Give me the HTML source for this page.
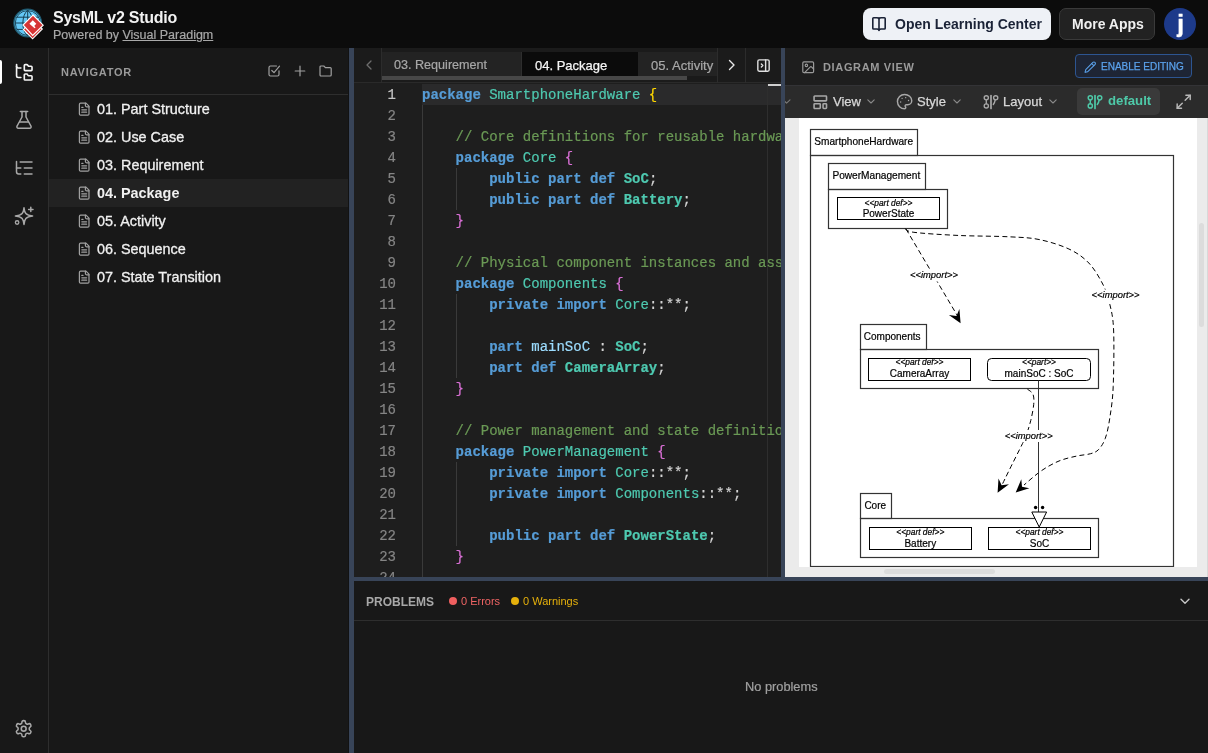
<!DOCTYPE html>
<html><head><meta charset="utf-8">
<style>
*{box-sizing:border-box;margin:0;padding:0}
html,body{width:1208px;height:753px;overflow:hidden;background:#181818;font-family:"Liberation Sans",sans-serif;}
.a{position:absolute}
#hdr{left:0;top:0;width:1208px;height:48px;background:#0c0c0c}
#act{left:0;top:48px;width:49px;height:705px;background:#181818;border-right:1px solid #2e2e2e}
#nav{left:49px;top:48px;width:300px;height:705px;background:#181818}
.spl{background:#384458}
#ed{left:354px;top:48px;width:427px;height:529px;background:#1e1e1e;overflow:hidden}
#dg{left:785px;top:48px;width:423px;height:529px;background:#1e1e1e;overflow:hidden}
#pb{left:354px;top:581px;width:854px;height:172px;background:#181818}
svg{display:block}
.code{font-family:"Liberation Mono",monospace;font-size:14px;white-space:pre;line-height:21px;-webkit-text-stroke-width:0.2px}
.k{color:#569cd6;font-weight:bold}
.t{color:#4ec9b0}
.tb{color:#4ec9b0;font-weight:bold}
.c{color:#6a9955}
.v{color:#9cdcfe}
.p{color:#d4d4d4}
.y{color:#ffd700}
.m{color:#da70d6}
</style></head><body><div id="root" style="position:absolute;left:0;top:0;width:1208px;height:753px;overflow:hidden;will-change:transform">
<!-- HEADER -->
<div id="hdr" class="a">
  <svg class="a" style="left:10px;top:6px" width="36" height="36" viewBox="10 6 36 36">
    <circle cx="27.7" cy="23" r="13.8" fill="#64c8f6" stroke="#1f5a70" stroke-width="1.3"/>
    <circle cx="27.7" cy="23" r="12.4" fill="none" stroke="#0f2f3c" stroke-width="0.8"/>
    <g stroke="#173f52" stroke-width="1" fill="none">
      <path d="M27.7 10.5 C21.5 14 21 32 27.7 35.5"/>
      <path d="M27.7 10.5 C34 14 34.5 32 27.7 35.5"/>
      <line x1="27.7" y1="10.5" x2="27.7" y2="35.5"/>
      <line x1="15" y1="23" x2="40.5" y2="23"/>
      <line x1="16.5" y1="17.2" x2="39" y2="17.2"/>
      <line x1="16.5" y1="29.4" x2="39" y2="29.4"/>
    </g>
    <path d="M33 19.8 L42.3 29 L32.6 38.8 L23.4 29.4 Z" fill="#d63434" stroke="#fff" stroke-width="1.1"/>
    <path d="M33 15 L43.2 25.2 L32.7 35.4 L23 25 Z" fill="#d63434" stroke="#fff" stroke-width="1.1"/>
    <path d="M32.8 20.3 L36.3 23.8 L34.2 25.9 L35.6 27.3 L34.6 28.3 L29.4 23.7 Z" fill="#fff"/>
  </svg>
  <div class="a" style="left:53px;top:9px;font-size:16px;font-weight:bold;color:#f2f2f2;letter-spacing:-0.25px">SysML v2 Studio</div>
  <div class="a" style="left:53px;top:28px;font-size:12.5px;color:#a8a8a8;-webkit-text-stroke:0.2px #a8a8a8">Powered by <span style="text-decoration:underline">Visual Paradigm</span></div>
  <div class="a" style="left:863px;top:8px;width:188px;height:32px;border-radius:8px;background:#eef1f6"></div>
  <svg class="a" style="left:866px;top:12px" width="24" height="24" viewBox="866 12 24 24" fill="none" stroke="#1a2236" stroke-width="1.6" stroke-linecap="round" stroke-linejoin="round"><path d="M872.8 18.6Q872.8 17.8 873.6 17.8H877Q878.4 17.8 879 18.6Q879.6 17.8 881 17.8H884.4Q885.2 17.8 885.2 18.6V28.2Q885.2 29 884.4 29H881Q879.6 29 879 29.8Q878.4 29 877 29H873.6Q872.8 29 872.8 28.2Z"/><path d="M879 18.6V30.5"/></svg>
  <div class="a" style="left:895px;top:16px;font-size:14px;font-weight:bold;color:#1a2236">Open Learning Center</div>
  <div class="a" style="left:1059px;top:8px;width:96px;height:32px;border-radius:7px;background:#222;border:1px solid #3a3a3a"></div>
  <div class="a" style="left:1072px;top:16px;font-size:14px;font-weight:bold;color:#f0f0f0">More Apps</div>
  <div class="a" style="left:1164px;top:8px;width:32px;height:32px;border-radius:16px;background:#1d3a8a"></div><div class="a" style="left:1164px;top:9px;width:33px;text-align:center;font-weight:bold;font-size:24px;line-height:30px;color:#fff;-webkit-text-stroke:0.4px #fff">j</div>
</div>

<!-- ACTIVITY BAR -->
<div id="act" class="a">
  <div class="a" style="left:0;top:12px;width:2px;height:24px;background:#fff;border-radius:0 2px 2px 0"></div>
  <svg class="a" style="left:13.60px;top:14.10px" width="20.6" height="20.6" viewBox="0 0 24 24" fill="none" stroke="#f5f5f5" stroke-width="1.9" stroke-linecap="round" stroke-linejoin="round"><path d="M20 10a1 1 0 0 0 1-1V6a1 1 0 0 0-1-1h-2.5a1 1 0 0 1-.8-.4l-.9-1.2A1 1 0 0 0 15 3h-2a1 1 0 0 0-1 1v5a1 1 0 0 0 1 1Z"/><path d="M20 21a1 1 0 0 0 1-1v-3a1 1 0 0 0-1-1h-2.9a1 1 0 0 1-.88-.55l-.42-.85a1 1 0 0 0-.92-.6H13a1 1 0 0 0-1 1v5a1 1 0 0 0 1 1Z"/><path d="M3 5a2 2 0 0 0 2 2h3"/><path d="M3 3v13a2 2 0 0 0 2 2h3"/></svg>
  <svg class="a" style="left:15px;top:62px" width="18" height="20" viewBox="0 0 18 20" fill="none" stroke="#a8a8a8" stroke-width="1.5" stroke-linecap="round" stroke-linejoin="round"><path d="M5.3 1.5h7.4"/><path d="M7 1.5v5.5l-4.9 9a1.5 1.5 0 0 0 1.3 2.3h11.2a1.5 1.5 0 0 0 1.3-2.3l-4.9-9v-5.5"/><path d="M4.6 12h8.8"/></svg>
  <svg class="a" style="left:8px;top:106px" width="32" height="32" viewBox="8 154 32 32" fill="none" stroke="#a8a8a8" stroke-width="1.5" stroke-linecap="round" stroke-linejoin="round"><path d="M16.5 161.5V171.8Q16.5 173.9 18.6 173.9H20.8"/><path d="M16.5 168H20.8"/><path d="M20.2 162H32"/><path d="M24.3 168H32"/><path d="M24.3 173.9H32"/></svg>
  <svg class="a" style="left:8px;top:152px" width="32" height="32" viewBox="8 200 32 32" fill="none" stroke="#a8a8a8" stroke-width="1.5" stroke-linecap="round" stroke-linejoin="round"><path d="M24 207.8C24.5 212.6 25.6 215.5 32.6 216C25.6 216.5 24.5 219.4 24 224.4C23.5 219.4 22.4 216.5 15.4 216C22.4 215.5 23.5 212.6 24 207.8Z"/><path d="M30.8 207.2v4.4M28.6 209.4h4.4"/><circle cx="17.1" cy="222.5" r="1.75" stroke-width="1.3"/></svg>
  <svg class="a" style="left:14.20px;top:671.20px" width="19.4" height="19.4" viewBox="0 0 24 24" fill="none" stroke="#a8a8a8" stroke-width="1.9" stroke-linecap="round" stroke-linejoin="round"><path d="M12.22 2h-.44a2 2 0 0 0-2 2v.18a2 2 0 0 1-1 1.73l-.43.25a2 2 0 0 1-2 0l-.15-.08a2 2 0 0 0-2.73.73l-.22.38a2 2 0 0 0 .73 2.73l.15.1a2 2 0 0 1 1 1.72v.51a2 2 0 0 1-1 1.74l-.15.09a2 2 0 0 0-.73 2.730l.22.38a2 2 0 0 0 2.73.73l.15-.08a2 2 0 0 1 2 0l.43.25a2 2 0 0 1 1 1.73V20a2 2 0 0 0 2 2h.44a2 2 0 0 0 2-2v-.18a2 2 0 0 1 1-1.73l.43-.25a2 2 0 0 1 2 0l.15.08a2 2 0 0 0 2.73-.73l.22-.39a2 2 0 0 0-.73-2.73l-.15-.08a2 2 0 0 1-1-1.74v-.5a2 2 0 0 1 1-1.74l.15-.09a2 2 0 0 0 .73-2.73l-.22-.38a2 2 0 0 0-2.73-.73l-.15.08a2 2 0 0 1-2 0l-.43-.25a2 2 0 0 1-1-1.73V4a2 2 0 0 0-2-2z"/><circle cx="12" cy="12" r="3"/></svg>
</div>

<!-- NAVIGATOR -->
<div id="nav" class="a">
  <div class="a" style="left:12px;top:18px;font-size:11px;font-weight:bold;color:#9a9a9a;letter-spacing:0.75px">NAVIGATOR</div>
  <div class="a" style="left:0;top:46px;width:300px;height:1px;background:#2e2e2e"></div>
  <svg class="a" style="left:28px;top:54.2px" width="14.4" height="14.4" viewBox="0 0 24 24" fill="none" stroke="#a0a0a0" stroke-width="2" stroke-linecap="round" stroke-linejoin="round"><path d="M15 2H6a2 2 0 0 0-2 2v16a2 2 0 0 0 2 2h12a2 2 0 0 0 2-2V7Z"/><path d="M14 2v4a2 2 0 0 0 2 2h4"/><path d="M10 9H8"/><path d="M16 13H8"/><path d="M16 17H8"/></svg>
  <div class="a" style="left:48px;top:53px;font-size:14.4px;font-weight:normal;color:#f0f0f0;-webkit-text-stroke:0.3px #f0f0f0;white-space:nowrap">01. Part Structure</div>
  <svg class="a" style="left:28px;top:82.2px" width="14.4" height="14.4" viewBox="0 0 24 24" fill="none" stroke="#a0a0a0" stroke-width="2" stroke-linecap="round" stroke-linejoin="round"><path d="M15 2H6a2 2 0 0 0-2 2v16a2 2 0 0 0 2 2h12a2 2 0 0 0 2-2V7Z"/><path d="M14 2v4a2 2 0 0 0 2 2h4"/><path d="M10 9H8"/><path d="M16 13H8"/><path d="M16 17H8"/></svg>
  <div class="a" style="left:48px;top:81px;font-size:14.4px;font-weight:normal;color:#f0f0f0;-webkit-text-stroke:0.3px #f0f0f0;white-space:nowrap">02. Use Case</div>
  <svg class="a" style="left:28px;top:110.2px" width="14.4" height="14.4" viewBox="0 0 24 24" fill="none" stroke="#a0a0a0" stroke-width="2" stroke-linecap="round" stroke-linejoin="round"><path d="M15 2H6a2 2 0 0 0-2 2v16a2 2 0 0 0 2 2h12a2 2 0 0 0 2-2V7Z"/><path d="M14 2v4a2 2 0 0 0 2 2h4"/><path d="M10 9H8"/><path d="M16 13H8"/><path d="M16 17H8"/></svg>
  <div class="a" style="left:48px;top:109px;font-size:14.4px;font-weight:normal;color:#f0f0f0;-webkit-text-stroke:0.3px #f0f0f0;white-space:nowrap">03. Requirement</div>
  <div class="a" style="left:0;top:131px;width:300px;height:28px;background:#222222"></div>
  <svg class="a" style="left:28px;top:138.2px" width="14.4" height="14.4" viewBox="0 0 24 24" fill="none" stroke="#a0a0a0" stroke-width="2" stroke-linecap="round" stroke-linejoin="round"><path d="M15 2H6a2 2 0 0 0-2 2v16a2 2 0 0 0 2 2h12a2 2 0 0 0 2-2V7Z"/><path d="M14 2v4a2 2 0 0 0 2 2h4"/><path d="M10 9H8"/><path d="M16 13H8"/><path d="M16 17H8"/></svg>
  <div class="a" style="left:48px;top:137px;font-size:14.4px;font-weight:bold;color:#f0f0f0;white-space:nowrap">04. Package</div>
  <svg class="a" style="left:28px;top:166.2px" width="14.4" height="14.4" viewBox="0 0 24 24" fill="none" stroke="#a0a0a0" stroke-width="2" stroke-linecap="round" stroke-linejoin="round"><path d="M15 2H6a2 2 0 0 0-2 2v16a2 2 0 0 0 2 2h12a2 2 0 0 0 2-2V7Z"/><path d="M14 2v4a2 2 0 0 0 2 2h4"/><path d="M10 9H8"/><path d="M16 13H8"/><path d="M16 17H8"/></svg>
  <div class="a" style="left:48px;top:165px;font-size:14.4px;font-weight:normal;color:#f0f0f0;-webkit-text-stroke:0.3px #f0f0f0;white-space:nowrap">05. Activity</div>
  <svg class="a" style="left:28px;top:194.2px" width="14.4" height="14.4" viewBox="0 0 24 24" fill="none" stroke="#a0a0a0" stroke-width="2" stroke-linecap="round" stroke-linejoin="round"><path d="M15 2H6a2 2 0 0 0-2 2v16a2 2 0 0 0 2 2h12a2 2 0 0 0 2-2V7Z"/><path d="M14 2v4a2 2 0 0 0 2 2h4"/><path d="M10 9H8"/><path d="M16 13H8"/><path d="M16 17H8"/></svg>
  <div class="a" style="left:48px;top:193px;font-size:14.4px;font-weight:normal;color:#f0f0f0;-webkit-text-stroke:0.3px #f0f0f0;white-space:nowrap">06. Sequence</div>
  <svg class="a" style="left:28px;top:222.2px" width="14.4" height="14.4" viewBox="0 0 24 24" fill="none" stroke="#a0a0a0" stroke-width="2" stroke-linecap="round" stroke-linejoin="round"><path d="M15 2H6a2 2 0 0 0-2 2v16a2 2 0 0 0 2 2h12a2 2 0 0 0 2-2V7Z"/><path d="M14 2v4a2 2 0 0 0 2 2h4"/><path d="M10 9H8"/><path d="M16 13H8"/><path d="M16 17H8"/></svg>
  <div class="a" style="left:48px;top:221px;font-size:14.4px;font-weight:normal;color:#f0f0f0;-webkit-text-stroke:0.3px #f0f0f0;white-space:nowrap">07. State Transition</div>
  <svg class="a" style="left:218px;top:16px" width="14" height="14" viewBox="0 0 14 14" fill="none" stroke="#a0a0a0" stroke-width="1.2" stroke-linecap="round" stroke-linejoin="round"><path d="M12 6.8v3.7a1.5 1.5 0 0 1-1.5 1.5h-7a1.5 1.5 0 0 1-1.5-1.5v-7a1.5 1.5 0 0 1 1.5-1.5h6"/><path d="M4.8 6.5l2.2 2.2l5.5-6.5"/></svg>
  <svg class="a" style="left:245px;top:17px" width="12" height="12" viewBox="0 0 12 12" fill="none" stroke="#a0a0a0" stroke-width="1.2" stroke-linecap="round"><path d="M6 1.2v9.6M1.2 6h9.6"/></svg>
  <svg class="a" style="left:270px;top:17px" width="14" height="12" viewBox="0 0 14 12" fill="none" stroke="#a0a0a0" stroke-width="1.2" stroke-linejoin="round"><path d="M1 2a1 1 0 0 1 1-1h2.8l1.6 1.6h4.8a1 1 0 0 1 1 1v6.4a1 1 0 0 1-1 1h-9.2a1 1 0 0 1-1-1z"/></svg>
</div>

<div class="a spl" style="left:349px;top:48px;width:5px;height:705px"></div>
<div class="a" style="left:348px;top:48px;width:1px;height:705px;background:#121212"></div>

<!-- EDITOR -->
<div id="ed" class="a">
  <div class="a" style="left:0;top:0;width:427px;height:35px;background:#1b1b1b;border-bottom:1px solid #2a2a2a"></div>
  <div class="a" style="left:27px;top:0;width:1px;height:35px;background:#2c2c2c"></div>
  <svg class="a" style="left:9px;top:11px" width="12" height="12" viewBox="0 0 12 12" fill="none" stroke="#6e6e6e" stroke-width="1.3" stroke-linecap="round" stroke-linejoin="round"><path d="M8 2L4 6L8 10"/></svg>
  <div class="a" style="left:28px;top:4px;width:140px;height:24px;background:#232323"></div>
  <div class="a" style="left:168px;top:4px;width:116px;height:24px;background:#0b0b0b"></div>
  <div class="a" style="left:284px;top:4px;width:79px;height:24px;background:#232323;overflow:hidden"></div>
  <div class="a" style="left:167px;top:4px;width:1px;height:24px;background:#2e2e2e"></div>
  <div class="a" style="left:28px;top:28px;width:335px;height:4px;background:#1a1a1a"></div>
  <div class="a" style="left:28px;top:28px;width:305px;height:4px;background:#474747"></div>
  <div class="a" style="left:40px;top:10px;font-size:12.6px;color:#a8a8a8;-webkit-text-stroke:0.2px #a8a8a8;white-space:nowrap">03. Requirement</div>
  <div class="a" style="left:181px;top:10px;font-size:13px;color:#f5f5f5;-webkit-text-stroke:0.25px #f5f5f5;white-space:nowrap">04. Package</div>
  <div class="a" style="left:297px;top:10px;width:66px;overflow:hidden;font-size:13px;color:#a8a8a8;-webkit-text-stroke:0.2px #a8a8a8;white-space:nowrap">05. Activity</div>
  <div class="a" style="left:363px;top:0;width:1px;height:35px;background:#2c2c2c"></div>
  <div class="a" style="left:391px;top:0;width:1px;height:35px;background:#2c2c2c"></div>
  <svg class="a" style="left:372px;top:11px" width="12" height="12" viewBox="0 0 12 12" fill="none" stroke="#e8e8e8" stroke-width="1.4" stroke-linecap="round" stroke-linejoin="round"><path d="M3.5 1.5L8 6L3.5 10.5"/></svg>
  <svg class="a" style="left:401px;top:9px" width="17" height="17" viewBox="0 0 24 24" fill="none" stroke="#e0e0e0" stroke-width="2" stroke-linecap="round" stroke-linejoin="round"><rect x="4" y="4" width="16" height="16" rx="2"/><path d="M15 4v16"/><path d="M9 10l2 2l-2 2"/></svg>
  <div class="a" style="left:68px;top:36px;width:359px;height:21px;background:#2a2a2b"></div>
  <div class="a" style="left:68px;top:57px;width:1px;height:480px;background:#3a3a3a"></div>
  <div class="a" style="left:102px;top:120px;width:1px;height:42px;background:#3a3a3a"></div>
  <div class="a" style="left:102px;top:246px;width:1px;height:84px;background:#3a3a3a"></div>
  <div class="a" style="left:102px;top:414px;width:1px;height:84px;background:#3a3a3a"></div>
  <div class="a" style="left:413px;top:36px;width:1px;height:500px;background:#2e2e2e"></div>
  <div class="a" style="left:414px;top:36px;width:13px;height:2px;background:#d0d0d0"></div>
  <div class="a code" style="left:0;top:37px;width:42px;text-align:right;color:#858585"><span style="color:#c6c6c6">1</span>
2
3
4
5
6
7
8
9
10
11
12
13
14
15
16
17
18
19
20
21
22
23
24</div>
  <div class="a code" style="left:68px;top:37px;color:#d4d4d4"><span class="k">package</span> <span class="t">SmartphoneHardware</span> <span class="y">{</span>

    <span class="c">// Core definitions for reusable hardware components</span>
    <span class="k">package</span> <span class="t">Core</span> <span class="m">{</span>
        <span class="k">public</span> <span class="k">part</span> <span class="k">def</span> <span class="tb">SoC</span><span class="p">;</span>
        <span class="k">public</span> <span class="k">part</span> <span class="k">def</span> <span class="tb">Battery</span><span class="p">;</span>
    <span class="m">}</span>

    <span class="c">// Physical component instances and assemblies</span>
    <span class="k">package</span> <span class="t">Components</span> <span class="m">{</span>
        <span class="k">private</span> <span class="k">import</span> <span class="t">Core</span><span class="p">::**;</span>

        <span class="k">part</span> <span class="v">mainSoC</span> <span class="p">:</span> <span class="tb">SoC</span><span class="p">;</span>
        <span class="k">part</span> <span class="k">def</span> <span class="tb">CameraArray</span><span class="p">;</span>
    <span class="m">}</span>

    <span class="c">// Power management and state definitions</span>
    <span class="k">package</span> <span class="t">PowerManagement</span> <span class="m">{</span>
        <span class="k">private</span> <span class="k">import</span> <span class="t">Core</span><span class="p">::**;</span>
        <span class="k">private</span> <span class="k">import</span> <span class="t">Components</span><span class="p">::**;</span>

        <span class="k">public</span> <span class="k">part</span> <span class="k">def</span> <span class="tb">PowerState</span><span class="p">;</span>
    <span class="m">}</span>
</div>
</div>
<div class="a spl" style="left:781px;top:48px;width:4px;height:533px"></div>
<div class="a spl" style="left:354px;top:577px;width:854px;height:4px"></div>

<!-- DIAGRAM -->
<div id="dg" class="a">
  <div class="a" style="left:0;top:37px;width:423px;height:1px;background:#333336"></div>
  <svg class="a" style="left:15.80px;top:11.80px" width="14.4" height="14.4" viewBox="0 0 24 24" fill="none" stroke="#9a9a9a" stroke-width="2" stroke-linecap="round" stroke-linejoin="round"><rect width="18" height="18" x="3" y="3" rx="2" ry="2"/><circle cx="9" cy="9" r="2"/><path d="m21 15-3.086-3.086a2 2 0 0 0-2.828 0L6 21"/></svg>
  <div class="a" style="left:38px;top:13px;font-size:11px;font-weight:bold;color:#9a9a9a;letter-spacing:0.65px;white-space:nowrap">DIAGRAM VIEW</div>
  <div class="a" style="left:290px;top:6px;width:117px;height:24px;border-radius:4px;background:#1e2535;border:1px solid #2d5591"></div>
  <svg class="a" style="left:298.50px;top:12.60px" width="12.4" height="12.4" viewBox="0 0 24 24" fill="none" stroke="#5aa0ea" stroke-width="2" stroke-linecap="round" stroke-linejoin="round"><path d="M21.174 6.812a1 1 0 0 0-3.986-3.987L3.842 16.174a2 2 0 0 0-.5.83l-1.321 4.352a.5.5 0 0 0 .623.622l4.353-1.32a2 2 0 0 0 .83-.497z"/><path d="m15 5 4 4"/></svg>
  <div class="a" style="left:316px;top:13px;font-size:10px;font-weight:normal;letter-spacing:0px;-webkit-text-stroke:0.25px #5aa0ea;color:#5aa0ea;white-space:nowrap">ENABLE EDITING</div>
  <div class="a" style="left:0;top:38px;width:423px;height:32px;background:#2b2b2b"></div>
  <svg class="a" style="left:0;top:42px" width="10" height="20" viewBox="785 90 10 20" fill="none" stroke="#7a7a7a" stroke-width="1.1" stroke-linecap="round" stroke-linejoin="round"><path d="M784 100.6l2.6 2.6l3.4-3.4"/></svg>
  <svg class="a" style="left:26.70px;top:45.70px" width="16.6" height="16.6" viewBox="0 0 24 24" fill="none" stroke="#a8a8a8" stroke-width="2.3" stroke-linecap="round" stroke-linejoin="round"><rect width="18" height="7" x="3" y="3" rx="1"/><rect width="9" height="7" x="3" y="14" rx="1"/><rect width="5" height="7" x="16" y="14" rx="1"/></svg>
  <div class="a" style="left:48px;top:46px;font-size:13px;color:#d8d8d8;-webkit-text-stroke:0.25px #d8d8d8;white-space:nowrap">View</div>
  <svg class="a" style="left:82px;top:51px" width="8" height="5" viewBox="0 0 8 5" fill="none" stroke="#8a8a8a" stroke-width="1.1" stroke-linecap="round" stroke-linejoin="round"><path d="M0.8 0.8l3.2 3.2l3.2-3.2"/></svg>
  <svg class="a" style="left:111.40px;top:45.40px" width="17.2" height="17.2" viewBox="0 0 24 24" fill="none" stroke="#a8a8a8" stroke-width="2" stroke-linecap="round" stroke-linejoin="round"><circle cx="13.5" cy="6.5" r="1" fill="#a8a8a8" stroke="none"/><circle cx="17.5" cy="10.5" r="1" fill="#a8a8a8" stroke="none"/><circle cx="8.5" cy="7.5" r="1" fill="#a8a8a8" stroke="none"/><circle cx="6.5" cy="12.5" r="1" fill="#a8a8a8" stroke="none"/><path d="M12 2C6.5 2 2 6.5 2 12s4.5 10 10 10c.926 0 1.648-.746 1.648-1.688 0-.437-.18-.835-.437-1.125-.29-.289-.438-.652-.438-1.125a1.64 1.64 0 0 1 1.668-1.668h1.996c3.051 0 5.555-2.503 5.555-5.554C21.965 6.012 17.461 2 12 2z"/></svg>
  <div class="a" style="left:132px;top:46px;font-size:13px;color:#d8d8d8;-webkit-text-stroke:0.25px #d8d8d8;white-space:nowrap">Style</div>
  <svg class="a" style="left:168px;top:51px" width="8" height="5" viewBox="0 0 8 5" fill="none" stroke="#8a8a8a" stroke-width="1.1" stroke-linecap="round" stroke-linejoin="round"><path d="M0.8 0.8l3.2 3.2l3.2-3.2"/></svg>
  <svg class="a" style="left:194px;top:42px" width="24" height="24" viewBox="979 90 24 24" fill="none" stroke="#a8a8a8" stroke-width="1.35" stroke-linecap="round" stroke-linejoin="round"><circle cx="986.3" cy="97.8" r="2.1"/><circle cx="986.3" cy="105.9" r="2.1"/><path d="M986.3 99.9v3.9"/><path d="M991 95.6v12.8" stroke-width="1.7"/><circle cx="995.7" cy="97.8" r="2.1"/><path d="M995.2 99.9c-0.3 2-1 3.4-1.9 4.6"/></svg>
  <div class="a" style="left:218px;top:46px;font-size:13px;color:#d8d8d8;-webkit-text-stroke:0.25px #d8d8d8;white-space:nowrap">Layout</div>
  <svg class="a" style="left:264px;top:51px" width="8" height="5" viewBox="0 0 8 5" fill="none" stroke="#8a8a8a" stroke-width="1.1" stroke-linecap="round" stroke-linejoin="round"><path d="M0.8 0.8l3.2 3.2l3.2-3.2"/></svg>
  <div class="a" style="left:292px;top:40px;width:83px;height:27px;border-radius:5px;background:#3a3a3a"></div>
  <svg class="a" style="left:298.0px;top:42px" width="24" height="24" viewBox="979 90 24 24" fill="none" stroke="#4ec9a8" stroke-width="1.45" stroke-linecap="round" stroke-linejoin="round"><circle cx="986.3" cy="97.8" r="2.1"/><circle cx="986.3" cy="105.9" r="2.1"/><path d="M986.3 99.9v3.9"/><path d="M991 95.6v12.8" stroke-width="1.7"/><circle cx="995.7" cy="97.8" r="2.1"/><path d="M995.2 99.9c-0.3 2-1 3.4-1.9 4.6"/></svg>
  <div class="a" style="left:323px;top:45px;font-size:13.2px;font-weight:bold;color:#4ec9a8;white-space:nowrap">default</div>
  <svg class="a" style="left:390.30px;top:45.25px" width="17.4" height="17.4" viewBox="0 0 24 24" fill="none" stroke="#b8b8b8" stroke-width="2" stroke-linecap="round" stroke-linejoin="round"><path d="M15 3h6v6"/><path d="M9 21H3v-6"/><path d="M21 3l-7 7"/><path d="M3 21l7-7"/></svg>
  <div class="a" style="left:0;top:70px;width:423px;height:459px;background:#ebebeb"></div>
  <div class="a" style="left:14px;top:70px;width:398px;height:449px;background:#fff"></div>
  <div class="a" style="left:99px;top:521px;width:111px;height:5px;border-radius:3px;background:#dcdcdc"></div>
  <div class="a" style="left:414px;top:175px;width:5px;height:104px;border-radius:3px;background:#dcdcdc"></div>
  <div class="a" style="left:422px;top:70px;width:1px;height:459px;background:#d8d8d8"></div>
  <!--DG--><svg class="a" style="left:14px;top:70px" width="398" height="449" viewBox="799 118 398 449" font-family="Liberation Sans, sans-serif">
  <g fill="none" stroke="#333" stroke-width="1.2">
  <rect x="810.5" y="129.5" width="107" height="26"/>
  <rect x="810.5" y="155.5" width="363" height="411"/>
  <rect x="828.5" y="163.5" width="97" height="26"/>
  <rect x="828.5" y="189.5" width="119" height="39"/>
  <rect x="860.5" y="324.5" width="66" height="25"/>
  <rect x="860.5" y="349.5" width="238" height="39"/>
  <rect x="860.5" y="493.5" width="31" height="25"/>
  <rect x="860.5" y="518.5" width="238" height="39"/>
  </g>
  <g fill="none" stroke="#000" stroke-width="1">
  <rect x="837.5" y="197.5" width="102" height="22"/>
  <rect x="868.5" y="358.5" width="102" height="22"/>
  <rect x="987.5" y="358.5" width="103" height="22" rx="4"/>
  <rect x="869.5" y="527.5" width="102" height="22"/>
  <rect x="988.5" y="527.5" width="102" height="22"/>
  </g>
  <g fill="none" stroke="#000" stroke-width="1" stroke-dasharray="5,3.2">
  <path d="M906 229 L957 315"/>
  <path d="M905.0 228.5C906.5 229.1 904.8 231.1 913.9 232.3C923.0 233.5 943.7 234.8 959.6 235.5C975.5 236.2 996.1 236.1 1009.3 236.8C1022.5 237.5 1029.1 237.5 1039.0 239.5C1048.9 241.5 1060.6 245.1 1068.9 249.0C1077.2 252.9 1083.2 257.2 1088.8 263.0C1094.4 268.8 1099.2 277.3 1102.7 284.0C1106.2 290.7 1107.8 295.7 1109.6 303.4C1111.4 311.1 1113.0 316.2 1113.6 330.0C1114.2 343.8 1113.8 371.7 1113.2 386.4C1112.6 401.1 1111.1 409.4 1109.8 418.0C1108.5 426.6 1107.2 433.0 1105.3 438.3C1103.4 443.6 1101.0 447.0 1098.5 449.6C1096.0 452.2 1094.2 452.6 1090.6 453.7C1087.0 454.8 1082.3 454.8 1077.0 456.0C1071.7 457.2 1065.0 458.5 1059.0 461.0C1053.0 463.5 1046.8 467.0 1041.0 471.0C1035.2 475.0 1026.8 482.7 1024.0 485.0"/>
  <path d="M1027.4 389.1C1028.3 390.0 1032.0 391.7 1033.0 394.3C1034.0 396.9 1034.1 400.2 1033.7 404.5C1033.3 408.8 1032.1 415.1 1030.8 420.3C1029.5 425.6 1027.5 431.9 1026.0 436.0C1024.5 440.1 1024.6 439.3 1021.8 445.0C1019.0 450.7 1012.6 463.3 1009.3 470.0C1006.0 476.7 1003.2 482.5 1002.0 485.0"/>
  </g>
  <path d="M1038.5 380.5 V512" stroke="#333" stroke-width="1"/>
  <g fill="#fff"><rect x="910" y="269.5" width="48" height="12"/><rect x="1091.6" y="289.5" width="48" height="12"/><rect x="1004.7" y="430" width="48" height="12"/></g>
  <path d="M960.6 323.3L948.9 315.0L956.4 315.9L959.4 309.0Z" fill="#000"/>
  <path d="M1015.7 492.5L1021.3 479.3L1022.0 486.8L1029.4 488.2Z" fill="#000"/>
  <path d="M997.6 492.8L998.5 478.5L1001.6 485.3L1009.0 484.2Z" fill="#000"/>
  <path d="M1031.8 512 H1046.6 L1039.2 527 Z" fill="#fff" stroke="#000" stroke-width="1"/>
  <circle cx="1035.6" cy="507.5" r="1.7" fill="#000"/><circle cx="1042.6" cy="507.5" r="1.7" fill="#000"/>
  <g fill="#000" stroke="#000" stroke-width="0.2"><text x="814.3" y="145.3" font-size="10.1" text-anchor="start">SmartphoneHardware</text><text x="832.4" y="179.1" font-size="10.15" text-anchor="start">PowerManagement</text><text x="888.5" y="205.6" font-size="8.4" text-anchor="middle" font-style="italic">&lt;&lt;part def&gt;&gt;</text><text x="888.5" y="217" font-size="10" text-anchor="middle">PowerState</text><text x="863.8" y="339.7" font-size="10" text-anchor="start">Components</text><text x="919.5" y="365.3" font-size="8.4" text-anchor="middle" font-style="italic">&lt;&lt;part def&gt;&gt;</text><text x="919.5" y="376.9" font-size="10" text-anchor="middle">CameraArray</text><text x="1039" y="365.3" font-size="8.4" text-anchor="middle" font-style="italic">&lt;&lt;part&gt;&gt;</text><text x="1039" y="376.9" font-size="10" text-anchor="middle">mainSoC : SoC</text><text x="864.4" y="508.5" font-size="10" text-anchor="start">Core</text><text x="920.3" y="535.3" font-size="8.4" text-anchor="middle" font-style="italic">&lt;&lt;part def&gt;&gt;</text><text x="920.3" y="546.6" font-size="10" text-anchor="middle">Battery</text><text x="1039.5" y="535.3" font-size="8.4" text-anchor="middle" font-style="italic">&lt;&lt;part def&gt;&gt;</text><text x="1039.5" y="546.6" font-size="10" text-anchor="middle">SoC</text><text x="934" y="278" font-size="9.4" text-anchor="middle" font-style="italic">&lt;&lt;import&gt;&gt;</text><text x="1115.6" y="298" font-size="9.4" text-anchor="middle" font-style="italic">&lt;&lt;import&gt;&gt;</text><text x="1028.7" y="438.8" font-size="9.4" text-anchor="middle" font-style="italic">&lt;&lt;import&gt;&gt;</text></g>
  </svg><!--/DG-->
</div>

<!-- PROBLEMS -->
<div id="pb" class="a">
  <div class="a" style="left:12px;top:14px;font-size:12px;font-weight:bold;color:#a8a8a8">PROBLEMS</div>
  <div class="a" style="left:95px;top:16px;width:8px;height:8px;border-radius:4px;background:#f05f5f"></div>
  <div class="a" style="left:107px;top:14px;font-size:11px;color:#ef6464;white-space:nowrap">0 Errors</div>
  <div class="a" style="left:157px;top:16px;width:8px;height:8px;border-radius:4px;background:#e5b00b"></div>
  <div class="a" style="left:169px;top:14px;font-size:11px;color:#e5b00b;white-space:nowrap">0 Warnings</div>
  <svg class="a" style="left:826px;top:17px" width="10" height="7" viewBox="0 0 10 7" fill="none" stroke="#c8c8c8" stroke-width="1.4" stroke-linecap="round" stroke-linejoin="round"><path d="M1 1.2l4 4l4-4"/></svg>
  <div class="a" style="left:0;top:39px;width:854px;height:1px;background:#2e2e2e"></div>
  <div class="a" style="left:391px;top:98px;font-size:12.8px;color:#a0a0a0;-webkit-text-stroke:0.2px #a0a0a0">No problems</div>
</div>
</div></body></html>
